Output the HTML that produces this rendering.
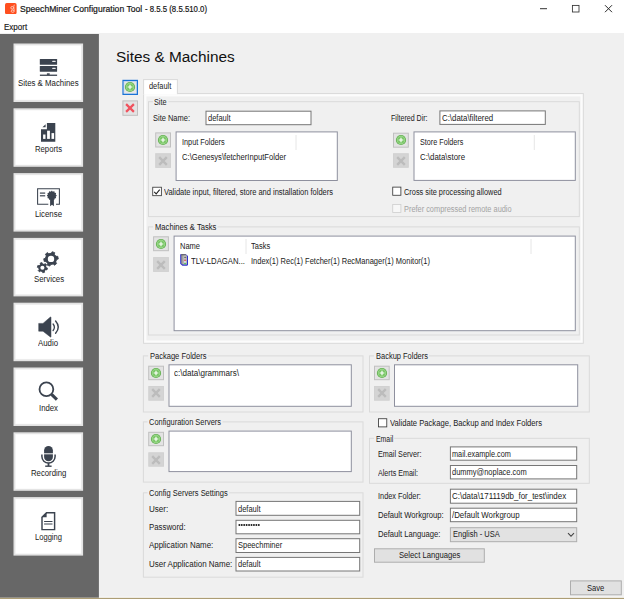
<!DOCTYPE html>
<html><head><meta charset="utf-8"><title>SpeechMiner Configuration Tool</title>
<style>
html,body{margin:0;padding:0;}
body{width:624px;height:599px;overflow:hidden;background:#fff;position:relative;font-family:"Liberation Sans",sans-serif;}
div,span,svg{position:absolute;box-sizing:border-box;}
.t{white-space:pre;transform-origin:0 0;}
</style></head>
<body>
<svg style="left:0;top:0" width="624" height="599" viewBox="0 0 624 599">
<rect x="0.00" y="0.00" width="624.00" height="33.00" rx="0" fill="#fff"/>
<rect x="0.00" y="33.00" width="624.00" height="566.00" rx="0" fill="#f0f0f0"/>
<rect x="0.00" y="34.00" width="98.90" height="563.70" rx="0" fill="#676767"/>
<rect x="99.00" y="596.80" width="525.00" height="1.20" rx="0" fill="#ffffff"/>
<rect x="0.00" y="597.80" width="624.00" height="1.20" rx="0" fill="#ac9d75"/>
<rect x="13.50" y="43.50" width="69.60" height="58.50" rx="0" fill="#e3e3e3"/>
<rect x="15.20" y="45.20" width="66.20" height="55.10" rx="0" fill="#f6f6f6"/>
<rect x="15.80" y="45.80" width="65.00" height="53.90" rx="0" fill="#ffffff"/>
<rect x="13.50" y="108.30" width="69.60" height="58.50" rx="0" fill="#e3e3e3"/>
<rect x="15.20" y="110.00" width="66.20" height="55.10" rx="0" fill="#f6f6f6"/>
<rect x="15.80" y="110.60" width="65.00" height="53.90" rx="0" fill="#ffffff"/>
<rect x="13.50" y="173.10" width="69.60" height="58.50" rx="0" fill="#e3e3e3"/>
<rect x="15.20" y="174.80" width="66.20" height="55.10" rx="0" fill="#f6f6f6"/>
<rect x="15.80" y="175.40" width="65.00" height="53.90" rx="0" fill="#ffffff"/>
<rect x="13.50" y="237.90" width="69.60" height="58.50" rx="0" fill="#e3e3e3"/>
<rect x="15.20" y="239.60" width="66.20" height="55.10" rx="0" fill="#f6f6f6"/>
<rect x="15.80" y="240.20" width="65.00" height="53.90" rx="0" fill="#ffffff"/>
<rect x="13.50" y="302.70" width="69.60" height="58.50" rx="0" fill="#e3e3e3"/>
<rect x="15.20" y="304.40" width="66.20" height="55.10" rx="0" fill="#f6f6f6"/>
<rect x="15.80" y="305.00" width="65.00" height="53.90" rx="0" fill="#ffffff"/>
<rect x="13.50" y="367.50" width="69.60" height="58.50" rx="0" fill="#e3e3e3"/>
<rect x="15.20" y="369.20" width="66.20" height="55.10" rx="0" fill="#f6f6f6"/>
<rect x="15.80" y="369.80" width="65.00" height="53.90" rx="0" fill="#ffffff"/>
<rect x="13.50" y="432.30" width="69.60" height="58.50" rx="0" fill="#e3e3e3"/>
<rect x="15.20" y="434.00" width="66.20" height="55.10" rx="0" fill="#f6f6f6"/>
<rect x="15.80" y="434.60" width="65.00" height="53.90" rx="0" fill="#ffffff"/>
<rect x="13.50" y="497.10" width="69.60" height="58.50" rx="0" fill="#e3e3e3"/>
<rect x="15.20" y="498.80" width="66.20" height="55.10" rx="0" fill="#f6f6f6"/>
<rect x="15.80" y="499.40" width="65.00" height="53.90" rx="0" fill="#ffffff"/>
<rect x="123.05" y="80.45" width="14.30" height="13.90" rx="0" fill="#e7e7e7" stroke="#1b73d6" stroke-width="1.3"/>
<rect x="123.95" y="81.35" width="12.50" height="12.10" rx="0" fill="none" stroke="#a9cbf0" stroke-width="0.5"/>
<rect x="122.90" y="100.90" width="14.60" height="14.40" rx="0" fill="#e3e3e3" stroke="#c0c0c0" stroke-width="1.0"/>
<rect x="143.60" y="93.60" width="439.70" height="249.70" rx="0" fill="#fcfcfc" stroke="#d9d9d9" stroke-width="1.0"/>
<rect x="146.40" y="96.40" width="434.10" height="244.10" rx="0" fill="#f0f0f0"/>
<rect x="143.10" y="79.10" width="34.80" height="15.20" rx="0" fill="#fff"/>
<path d="M143.60 94.10L143.60 79.60" stroke="#d9d9d9" stroke-width="1.0" fill="none"/>
<path d="M143.10 79.60L177.90 79.60" stroke="#d9d9d9" stroke-width="1.0" fill="none"/>
<path d="M177.40 79.60L177.40 94.10" stroke="#d9d9d9" stroke-width="1.0" fill="none"/>
<rect x="148.50" y="101.70" width="430.80" height="114.90" rx="0" fill="none" stroke="#dadada" stroke-width="1.0"/>
<rect x="152.80" y="99.70" width="15.50" height="4.00" rx="0" fill="#f0f0f0"/>
<rect x="206.00" y="111.20" width="105.00" height="13.50" rx="0" fill="#fff" stroke="#767676" stroke-width="1.0"/>
<rect x="155.70" y="132.90" width="14.80" height="14.10" rx="0" fill="#e3e3e3" stroke="#c0c0c0" stroke-width="1.0"/>
<rect x="155.70" y="153.70" width="14.80" height="13.70" rx="0" fill="#d4d4d4" stroke="#d1d1d1" stroke-width="1.0"/>
<rect x="176.10" y="131.90" width="161.20" height="48.60" rx="0" fill="#fff" stroke="#8e909e" stroke-width="1.0"/>
<path d="M296.00 135.00L296.00 150.00" stroke="#e6e6e6" stroke-width="1.0" fill="none"/>
<rect x="152.73" y="187.23" width="8.65" height="8.45" rx="0" fill="#fff" stroke="#3a3a3a" stroke-width="0.85"/>
<rect x="439.90" y="110.90" width="105.40" height="13.50" rx="0" fill="#fff" stroke="#767676" stroke-width="1.0"/>
<rect x="393.50" y="133.20" width="14.80" height="14.00" rx="0" fill="#e3e3e3" stroke="#c0c0c0" stroke-width="1.0"/>
<rect x="393.50" y="153.70" width="14.80" height="13.60" rx="0" fill="#d4d4d4" stroke="#d1d1d1" stroke-width="1.0"/>
<rect x="414.00" y="131.90" width="161.30" height="48.50" rx="0" fill="#fff" stroke="#8e909e" stroke-width="1.0"/>
<path d="M534.30 135.00L534.30 150.00" stroke="#e6e6e6" stroke-width="1.0" fill="none"/>
<rect x="392.73" y="187.12" width="8.15" height="8.15" rx="0" fill="#fff" stroke="#3a3a3a" stroke-width="0.85"/>
<rect x="392.73" y="204.43" width="8.15" height="8.05" rx="0" fill="#f7f7f7" stroke="#cfcfcf" stroke-width="0.85"/>
<rect x="148.40" y="226.90" width="430.90" height="108.10" rx="0" fill="none" stroke="#dadada" stroke-width="1.0"/>
<rect x="153.10" y="224.90" width="64.40" height="4.00" rx="0" fill="#f0f0f0"/>
<rect x="153.60" y="236.80" width="14.80" height="13.90" rx="0" fill="#e3e3e3" stroke="#c0c0c0" stroke-width="1.0"/>
<rect x="153.60" y="257.60" width="14.80" height="13.80" rx="0" fill="#d4d4d4" stroke="#d1d1d1" stroke-width="1.0"/>
<rect x="174.10" y="236.10" width="401.20" height="94.60" rx="0" fill="#fff" stroke="#8e909e" stroke-width="1.0"/>
<path d="M246.00 239.00L246.00 254.00" stroke="#e6e6e6" stroke-width="1.0" fill="none"/>
<path d="M531.00 239.00L531.00 254.00" stroke="#e6e6e6" stroke-width="1.0" fill="none"/>
<rect x="143.40" y="355.90" width="219.60" height="56.10" rx="0" fill="none" stroke="#dadada" stroke-width="1.0"/>
<rect x="148.20" y="353.90" width="59.50" height="4.00" rx="0" fill="#f0f0f0"/>
<rect x="148.70" y="366.20" width="14.80" height="13.50" rx="0" fill="#e3e3e3" stroke="#c0c0c0" stroke-width="1.0"/>
<rect x="148.80" y="386.50" width="14.70" height="13.70" rx="0" fill="#d4d4d4" stroke="#d1d1d1" stroke-width="1.0"/>
<rect x="169.00" y="364.80" width="182.30" height="41.50" rx="0" fill="#fff" stroke="#8e909e" stroke-width="1.0"/>
<rect x="369.50" y="355.90" width="219.80" height="56.10" rx="0" fill="none" stroke="#dadada" stroke-width="1.0"/>
<rect x="374.00" y="353.90" width="55.00" height="4.00" rx="0" fill="#f0f0f0"/>
<rect x="374.50" y="366.20" width="14.70" height="13.50" rx="0" fill="#e3e3e3" stroke="#c0c0c0" stroke-width="1.0"/>
<rect x="374.50" y="386.50" width="14.70" height="13.70" rx="0" fill="#d4d4d4" stroke="#d1d1d1" stroke-width="1.0"/>
<rect x="394.50" y="364.80" width="183.20" height="41.50" rx="0" fill="#fff" stroke="#8e909e" stroke-width="1.0"/>
<rect x="143.40" y="421.90" width="219.60" height="60.20" rx="0" fill="none" stroke="#dadada" stroke-width="1.0"/>
<rect x="147.50" y="419.90" width="75.00" height="4.00" rx="0" fill="#f0f0f0"/>
<rect x="148.70" y="432.30" width="14.80" height="13.40" rx="0" fill="#e3e3e3" stroke="#c0c0c0" stroke-width="1.0"/>
<rect x="148.80" y="452.80" width="14.70" height="13.40" rx="0" fill="#d4d4d4" stroke="#d1d1d1" stroke-width="1.0"/>
<rect x="169.00" y="431.10" width="182.30" height="40.50" rx="0" fill="#fff" stroke="#8e909e" stroke-width="1.0"/>
<rect x="378.53" y="418.73" width="8.25" height="8.15" rx="0" fill="#fff" stroke="#3a3a3a" stroke-width="0.85"/>
<rect x="369.50" y="438.30" width="219.80" height="45.00" rx="0" fill="none" stroke="#dadada" stroke-width="1.0"/>
<rect x="374.00" y="436.30" width="20.20" height="4.00" rx="0" fill="#f0f0f0"/>
<rect x="450.40" y="446.90" width="126.30" height="13.30" rx="0" fill="#fff" stroke="#767676" stroke-width="1.0"/>
<rect x="450.40" y="465.50" width="126.30" height="13.40" rx="0" fill="#fff" stroke="#767676" stroke-width="1.0"/>
<rect x="450.40" y="489.20" width="126.30" height="14.00" rx="0" fill="#fff" stroke="#767676" stroke-width="1.0"/>
<rect x="450.40" y="508.20" width="126.30" height="13.50" rx="0" fill="#fff" stroke="#767676" stroke-width="1.0"/>
<rect x="450.40" y="527.70" width="126.30" height="14.00" rx="0" fill="#e2e2e2" stroke="#adadad" stroke-width="1.0"/>
<rect x="374.50" y="548.80" width="109.80" height="13.40" rx="0" fill="#e1e1e1" stroke="#adadad" stroke-width="1.0"/>
<rect x="143.40" y="492.80" width="219.60" height="84.40" rx="0" fill="none" stroke="#dadada" stroke-width="1.0"/>
<rect x="147.50" y="490.80" width="81.70" height="4.00" rx="0" fill="#f0f0f0"/>
<rect x="236.00" y="501.40" width="123.70" height="13.90" rx="0" fill="#fff" stroke="#767676" stroke-width="1.0"/>
<rect x="236.00" y="520.30" width="123.70" height="13.50" rx="0" fill="#fff" stroke="#767676" stroke-width="1.0"/>
<rect x="236.00" y="538.70" width="123.70" height="13.80" rx="0" fill="#fff" stroke="#767676" stroke-width="1.0"/>
<rect x="236.00" y="557.40" width="123.70" height="13.60" rx="0" fill="#fff" stroke="#767676" stroke-width="1.0"/>
<rect x="570.50" y="580.90" width="50.80" height="13.90" rx="0" fill="#e1e1e1" stroke="#adadad" stroke-width="1.0"/>
</svg>
<svg style="left:5px;top:2.9px" width="11.6" height="11.2" viewBox="0 0 11.6 11.2"><rect x="0" y="0" width="11.6" height="11.2" rx="1.7" fill="#ff4f1f"/><circle cx="7.2" cy="4.8" r="1.35" fill="none" stroke="#ffd2c5" stroke-width="0.85"/><ellipse cx="7.7" cy="8.2" rx="1.5" ry="1.15" fill="none" stroke="#ffd2c5" stroke-width="0.85"/><path d="M9.3 1.7 Q8.6 3.4 8.9 5.2 Q9.3 6.6 9.1 7.8" fill="none" stroke="#ffd2c5" stroke-width="0.85"/></svg>
<span class="t" style="left:20.00px;top:2.00px;font-size:9.7px;line-height:13.58px;color:#111;font-weight:normal;transform:scaleX(0.8875);-webkit-text-stroke:0.22px #222;">SpeechMiner Configuration Tool</span>
<span class="t" style="left:145.00px;top:2.00px;font-size:9.7px;line-height:13.58px;color:#111;font-weight:normal;transform:scaleX(0.8050);-webkit-text-stroke:0.22px #222;">- 8.5.5 (8.5.510.0)</span>
<svg style="left:536px;top:0" width="88" height="18" viewBox="0 0 88 18"><path d="M4 8.7h7" stroke="#333" stroke-width="1"/><rect x="36.4" y="5.4" width="6.6" height="6.6" fill="none" stroke="#333" stroke-width="0.85"/><path d="M69 5.2l7 7M76 5.2l-7 7" stroke="#2a2a2a" stroke-width="1.0"/></svg>
<span class="t" style="left:4.40px;top:21.00px;font-size:8.8px;line-height:12.32px;color:#111;font-weight:normal;transform:scaleX(0.9120);-webkit-text-stroke:0.15px #222;">Export</span>
<span class="t" style="left:115.90px;top:46.00px;font-size:15.3px;line-height:21.42px;color:#111;font-weight:normal;transform:scaleX(1.0052);">Sites &amp; Machines</span>
<svg style="left:124.20px;top:81.40px" width="12" height="12" viewBox="0 0 12 12"><circle cx="6" cy="6" r="5.1" fill="#62b050"/><circle cx="6" cy="6" r="4.25" fill="#a4dc94"/><circle cx="6" cy="6" r="3.5" fill="#7cc869"/><path d="M6 3.7v4.6M3.7 6h4.6" stroke="#fff" stroke-width="1.15"/></svg>
<svg style="left:124.20px;top:102.10px" width="12" height="12" viewBox="0 0 12 12"><path d="M2.1 2.1l7.8 7.8M9.9 2.1l-7.8 7.8" stroke="#f0525e" stroke-width="2.2"/></svg>
<span class="t" style="left:148.70px;top:80.00px;font-size:8.9px;line-height:12.46px;color:#1a1a1a;font-weight:normal;transform:scaleX(0.8328);">default</span>
<span class="t" style="left:154.30px;top:96.00px;font-size:8.9px;line-height:12.46px;color:#1a1a1a;font-weight:normal;transform:scaleX(0.8172);">Site</span>
<span class="t" style="left:152.50px;top:112.00px;font-size:8.9px;line-height:12.46px;color:#1a1a1a;font-weight:normal;transform:scaleX(0.8427);">Site Name:</span>
<span class="t" style="left:207.60px;top:112.00px;font-size:8.9px;line-height:12.46px;color:#1a1a1a;font-weight:normal;transform:scaleX(0.8450);">default</span>
<svg style="left:157.10px;top:133.95px" width="12" height="12" viewBox="0 0 12 12"><circle cx="6" cy="6" r="5.1" fill="#62b050"/><circle cx="6" cy="6" r="4.25" fill="#a4dc94"/><circle cx="6" cy="6" r="3.5" fill="#7cc869"/><path d="M6 3.7v4.6M3.7 6h4.6" stroke="#fff" stroke-width="1.15"/></svg>
<svg style="left:157.10px;top:154.55px" width="12" height="12" viewBox="0 0 12 12"><path d="M2.2 2.2l7.6 7.6M9.8 2.2l-7.6 7.6" stroke="#bcbcbc" stroke-width="2.4"/></svg>
<span class="t" style="left:181.70px;top:136.00px;font-size:8.9px;line-height:12.46px;color:#1a1a1a;font-weight:normal;transform:scaleX(0.8222);">Input Folders</span>
<span class="t" style="left:181.70px;top:151.00px;font-size:8.9px;line-height:12.46px;color:#1a1a1a;font-weight:normal;transform:scaleX(0.8605);">C:\Genesys\fetcherInputFolder</span>
<svg style="left:152.30px;top:186.80px" width="10" height="10" viewBox="0 0 10 10"><path d="M2.2 4.8l2.0 2.1L7.7 2.7" fill="none" stroke="#222" stroke-width="1.05"/></svg>
<span class="t" style="left:164.00px;top:186.00px;font-size:8.9px;line-height:12.46px;color:#1a1a1a;font-weight:normal;transform:scaleX(0.8444);">Validate input, filtered, store and installation folders</span>
<span class="t" style="left:390.70px;top:112.00px;font-size:8.9px;line-height:12.46px;color:#1a1a1a;font-weight:normal;transform:scaleX(0.7978);">Filtered Dir:</span>
<span class="t" style="left:441.80px;top:112.00px;font-size:8.9px;line-height:12.46px;color:#1a1a1a;font-weight:normal;transform:scaleX(0.8871);">C:\data\filtered</span>
<svg style="left:394.90px;top:134.20px" width="12" height="12" viewBox="0 0 12 12"><circle cx="6" cy="6" r="5.1" fill="#62b050"/><circle cx="6" cy="6" r="4.25" fill="#a4dc94"/><circle cx="6" cy="6" r="3.5" fill="#7cc869"/><path d="M6 3.7v4.6M3.7 6h4.6" stroke="#fff" stroke-width="1.15"/></svg>
<svg style="left:394.90px;top:154.50px" width="12" height="12" viewBox="0 0 12 12"><path d="M2.2 2.2l7.6 7.6M9.8 2.2l-7.6 7.6" stroke="#bcbcbc" stroke-width="2.4"/></svg>
<span class="t" style="left:419.70px;top:136.00px;font-size:8.9px;line-height:12.46px;color:#1a1a1a;font-weight:normal;transform:scaleX(0.8127);">Store Folders</span>
<span class="t" style="left:419.70px;top:151.00px;font-size:8.9px;line-height:12.46px;color:#1a1a1a;font-weight:normal;transform:scaleX(0.8856);">C:\data\store</span>
<span class="t" style="left:403.70px;top:186.00px;font-size:8.9px;line-height:12.46px;color:#1a1a1a;font-weight:normal;transform:scaleX(0.8313);">Cross site processing allowed</span>
<span class="t" style="left:403.70px;top:203.00px;font-size:8.9px;line-height:12.46px;color:#a3a3a3;font-weight:normal;transform:scaleX(0.8325);">Prefer compressed remote audio</span>
<span class="t" style="left:154.60px;top:221.00px;font-size:8.9px;line-height:12.46px;color:#1a1a1a;font-weight:normal;transform:scaleX(0.8604);">Machines &amp; Tasks</span>
<svg style="left:155.00px;top:237.75px" width="12" height="12" viewBox="0 0 12 12"><circle cx="6" cy="6" r="5.1" fill="#62b050"/><circle cx="6" cy="6" r="4.25" fill="#a4dc94"/><circle cx="6" cy="6" r="3.5" fill="#7cc869"/><path d="M6 3.7v4.6M3.7 6h4.6" stroke="#fff" stroke-width="1.15"/></svg>
<svg style="left:155.00px;top:258.50px" width="12" height="12" viewBox="0 0 12 12"><path d="M2.2 2.2l7.6 7.6M9.8 2.2l-7.6 7.6" stroke="#bcbcbc" stroke-width="2.4"/></svg>
<span class="t" style="left:179.60px;top:240.00px;font-size:8.9px;line-height:12.46px;color:#1a1a1a;font-weight:normal;transform:scaleX(0.8450);">Name</span>
<span class="t" style="left:250.70px;top:240.00px;font-size:8.9px;line-height:12.46px;color:#1a1a1a;font-weight:normal;transform:scaleX(0.8450);">Tasks</span>
<span class="t" style="left:191.00px;top:255.00px;font-size:8.9px;line-height:12.46px;color:#1a1a1a;font-weight:normal;transform:scaleX(0.8712);">TLV-LDAGAN...</span>
<span class="t" style="left:250.70px;top:255.00px;font-size:8.9px;line-height:12.46px;color:#1a1a1a;font-weight:normal;transform:scaleX(0.8440);">Index(1) Rec(1) Fetcher(1) RecManager(1) Monitor(1)</span>
<svg style="left:179.7px;top:253.9px" width="8.4" height="12" viewBox="0 0 8.4 12"><defs><linearGradient id="tw" x1="0" x2="1" y1="0" y2="0"><stop offset="0" stop-color="#8a8a8a"/><stop offset="0.55" stop-color="#c4c4c4"/><stop offset="1" stop-color="#b0b0b0"/></linearGradient></defs><path d="M0.2 0.3 H5.9 L8.1 2 V10.7 L7.2 11.8 H2.4 L0.2 9.8 Z" fill="#3030cc"/><path d="M1.2 0.4 H5.8 L7.0 1.9 V10.6 H2.7 L1.2 9.5 Z" fill="url(#tw)"/><rect x="1.2" y="0.3" width="4.6" height="1.0" fill="#585858"/><rect x="4.2" y="2.9" width="2.0" height="0.9" fill="#5a5a5a"/><rect x="4.1" y="5.7" width="2.0" height="1.1" fill="#e25555"/><rect x="4.1" y="7.4" width="2.0" height="1.0" fill="#ececf4"/><rect x="4.1" y="9.0" width="2.1" height="1.3" fill="#5cc466"/></svg>
<span class="t" style="left:149.70px;top:350.00px;font-size:8.9px;line-height:12.46px;color:#1a1a1a;font-weight:normal;transform:scaleX(0.8482);">Package Folders</span>
<svg style="left:150.10px;top:366.95px" width="12" height="12" viewBox="0 0 12 12"><circle cx="6" cy="6" r="5.1" fill="#62b050"/><circle cx="6" cy="6" r="4.25" fill="#a4dc94"/><circle cx="6" cy="6" r="3.5" fill="#7cc869"/><path d="M6 3.7v4.6M3.7 6h4.6" stroke="#fff" stroke-width="1.15"/></svg>
<svg style="left:150.15px;top:387.35px" width="12" height="12" viewBox="0 0 12 12"><path d="M2.2 2.2l7.6 7.6M9.8 2.2l-7.6 7.6" stroke="#bcbcbc" stroke-width="2.4"/></svg>
<span class="t" style="left:174.00px;top:367.00px;font-size:8.9px;line-height:12.46px;color:#1a1a1a;font-weight:normal;transform:scaleX(0.9087);">c:\data\grammars\</span>
<span class="t" style="left:375.50px;top:350.00px;font-size:8.9px;line-height:12.46px;color:#1a1a1a;font-weight:normal;transform:scaleX(0.8432);">Backup Folders</span>
<svg style="left:375.85px;top:366.95px" width="12" height="12" viewBox="0 0 12 12"><circle cx="6" cy="6" r="5.1" fill="#62b050"/><circle cx="6" cy="6" r="4.25" fill="#a4dc94"/><circle cx="6" cy="6" r="3.5" fill="#7cc869"/><path d="M6 3.7v4.6M3.7 6h4.6" stroke="#fff" stroke-width="1.15"/></svg>
<svg style="left:375.85px;top:387.35px" width="12" height="12" viewBox="0 0 12 12"><path d="M2.2 2.2l7.6 7.6M9.8 2.2l-7.6 7.6" stroke="#bcbcbc" stroke-width="2.4"/></svg>
<span class="t" style="left:149.00px;top:416.00px;font-size:8.9px;line-height:12.46px;color:#1a1a1a;font-weight:normal;transform:scaleX(0.8387);">Configuration Servers</span>
<svg style="left:150.10px;top:433.00px" width="12" height="12" viewBox="0 0 12 12"><circle cx="6" cy="6" r="5.1" fill="#62b050"/><circle cx="6" cy="6" r="4.25" fill="#a4dc94"/><circle cx="6" cy="6" r="3.5" fill="#7cc869"/><path d="M6 3.7v4.6M3.7 6h4.6" stroke="#fff" stroke-width="1.15"/></svg>
<svg style="left:150.15px;top:453.50px" width="12" height="12" viewBox="0 0 12 12"><path d="M2.2 2.2l7.6 7.6M9.8 2.2l-7.6 7.6" stroke="#bcbcbc" stroke-width="2.4"/></svg>
<span class="t" style="left:389.70px;top:417.00px;font-size:8.9px;line-height:12.46px;color:#1a1a1a;font-weight:normal;transform:scaleX(0.8613);">Validate Package, Backup and Index Folders</span>
<span class="t" style="left:375.50px;top:433.00px;font-size:8.9px;line-height:12.46px;color:#1a1a1a;font-weight:normal;transform:scaleX(0.7747);">Email</span>
<span class="t" style="left:378.40px;top:448.00px;font-size:8.9px;line-height:12.46px;color:#1a1a1a;font-weight:normal;transform:scaleX(0.8148);">Email Server:</span>
<span class="t" style="left:451.80px;top:448.00px;font-size:8.9px;line-height:12.46px;color:#1a1a1a;font-weight:normal;transform:scaleX(0.8234);">mail.example.com</span>
<span class="t" style="left:378.40px;top:467.00px;font-size:8.9px;line-height:12.46px;color:#1a1a1a;font-weight:normal;transform:scaleX(0.8030);">Alerts Email:</span>
<span class="t" style="left:451.80px;top:466.00px;font-size:8.9px;line-height:12.46px;color:#1a1a1a;font-weight:normal;transform:scaleX(0.8450);">dummy@noplace.com</span>
<span class="t" style="left:378.40px;top:490.00px;font-size:8.9px;line-height:12.46px;color:#1a1a1a;font-weight:normal;transform:scaleX(0.8280);">Index Folder:</span>
<span class="t" style="left:451.80px;top:490.00px;font-size:8.9px;line-height:12.46px;color:#1a1a1a;font-weight:normal;transform:scaleX(0.8959);">C:\data\171119db_for_test\index</span>
<span class="t" style="left:378.40px;top:509.00px;font-size:8.9px;line-height:12.46px;color:#1a1a1a;font-weight:normal;transform:scaleX(0.8598);">Default Workgroup:</span>
<span class="t" style="left:451.80px;top:509.00px;font-size:8.9px;line-height:12.46px;color:#1a1a1a;font-weight:normal;transform:scaleX(0.8847);">/Default Workgroup</span>
<span class="t" style="left:378.40px;top:528.00px;font-size:8.9px;line-height:12.46px;color:#1a1a1a;font-weight:normal;transform:scaleX(0.8588);">Default Language:</span>
<span class="t" style="left:453.00px;top:528.00px;font-size:8.9px;line-height:12.46px;color:#1a1a1a;font-weight:normal;transform:scaleX(0.8452);">English - USA</span>
<svg style="left:567px;top:532.3px" width="8" height="6" viewBox="0 0 8 6"><path d="M1 1.2l3 3 3-3" fill="none" stroke="#444" stroke-width="1.05"/></svg>
<span class="t" style="left:399.00px;top:549.00px;font-size:8.9px;line-height:12.46px;color:#1a1a1a;font-weight:normal;transform:scaleX(0.8626);">Select Languages</span>
<span class="t" style="left:149.00px;top:487.00px;font-size:8.9px;line-height:12.46px;color:#1a1a1a;font-weight:normal;transform:scaleX(0.8441);">Config Servers Settings</span>
<span class="t" style="left:149.00px;top:503.00px;font-size:8.9px;line-height:12.46px;color:#1a1a1a;font-weight:normal;transform:scaleX(0.9096);">User:</span>
<span class="t" style="left:237.80px;top:503.00px;font-size:8.9px;line-height:12.46px;color:#1a1a1a;font-weight:normal;transform:scaleX(0.8450);">default</span>
<span class="t" style="left:149.00px;top:521.00px;font-size:8.9px;line-height:12.46px;color:#1a1a1a;font-weight:normal;transform:scaleX(0.8833);">Password:</span>
<svg style="left:238px;top:522px" width="26" height="6" viewBox="0 0 26 6"><circle cx="1.35" cy="2.9" r="1.0" fill="#1a1a1a"/><circle cx="3.78" cy="2.9" r="1.0" fill="#1a1a1a"/><circle cx="6.21" cy="2.9" r="1.0" fill="#1a1a1a"/><circle cx="8.64" cy="2.9" r="1.0" fill="#1a1a1a"/><circle cx="11.07" cy="2.9" r="1.0" fill="#1a1a1a"/><circle cx="13.50" cy="2.9" r="1.0" fill="#1a1a1a"/><circle cx="15.93" cy="2.9" r="1.0" fill="#1a1a1a"/><circle cx="18.36" cy="2.9" r="1.0" fill="#1a1a1a"/><circle cx="20.79" cy="2.9" r="1.0" fill="#1a1a1a"/></svg>
<span class="t" style="left:149.00px;top:539.00px;font-size:8.9px;line-height:12.46px;color:#1a1a1a;font-weight:normal;transform:scaleX(0.8927);">Application Name:</span>
<span class="t" style="left:237.80px;top:539.00px;font-size:8.9px;line-height:12.46px;color:#1a1a1a;font-weight:normal;transform:scaleX(0.8450);">Speechminer</span>
<span class="t" style="left:149.00px;top:558.00px;font-size:8.9px;line-height:12.46px;color:#1a1a1a;font-weight:normal;transform:scaleX(0.8981);">User Application Name:</span>
<span class="t" style="left:237.80px;top:558.00px;font-size:8.9px;line-height:12.46px;color:#1a1a1a;font-weight:normal;transform:scaleX(0.8450);">default</span>
<span class="t" style="left:587.00px;top:582.00px;font-size:8.9px;line-height:12.46px;color:#1a1a1a;font-weight:normal;transform:scaleX(0.8550);">Save</span>
<svg style="left:28.00px;top:52.00px" width="42" height="42" viewBox="0 0 42 42"><rect x="11.8" y="6.9" width="17.3" height="5.9" rx="0.5" fill="#3b434f"/><rect x="11.8" y="14.0" width="17.3" height="5.8" rx="0.5" fill="#3b434f"/><rect x="24.2" y="8.7" width="3.5" height="1.2" rx="0.5" fill="#e8e8ea"/><rect x="24.2" y="15.8" width="3.5" height="1.2" rx="0.5" fill="#e8e8ea"/><rect x="18.9" y="21.3" width="2.8" height="1.6" fill="#3b434f"/><rect x="11.9" y="22.6" width="17.2" height="1.3" fill="#3b434f"/></svg>
<span class="t" style="left:17.70px;top:77.00px;font-size:8.9px;line-height:12.46px;color:#1a1a1a;font-weight:normal;transform:scaleX(0.8837);">Sites &amp; Machines</span>
<svg style="left:28.00px;top:117.00px" width="42" height="42" viewBox="0 0 42 42"><path d="M18.9 6 H27.3 V24.7 H13 V12.3 H18.9 Z" fill="#3b434f"/><path d="M17.6 7.3 V10.2 H14.4 Z" fill="#3b434f"/><rect x="15.1" y="17.5" width="2.4" height="4.4" fill="#fff"/><rect x="19.1" y="13.7" width="2.8" height="8.2" fill="#fff"/><rect x="23.5" y="16.1" width="2.6" height="5.8" fill="#fff"/></svg>
<span class="t" style="left:35.20px;top:143.00px;font-size:8.9px;line-height:12.46px;color:#1a1a1a;font-weight:normal;transform:scaleX(0.8688);">Reports</span>
<svg style="left:28.00px;top:182.00px" width="42" height="42" viewBox="0 0 42 42"><path d="M20.3 22.3 H9.6 V6.7 H31.4 V22.3 H28" fill="none" stroke="#3b434f" stroke-width="1.05"/><rect x="11.9" y="10.5" width="5.3" height="1.2" fill="#3b434f"/><rect x="11.9" y="13.2" width="5.3" height="1.2" fill="#3b434f"/><polygon points="28.70,13.60 28.57,13.91 28.26,14.19 27.94,14.42 27.76,14.66 27.79,14.96 27.96,15.32 28.09,15.72 28.04,16.05 27.78,16.26 27.37,16.34 26.97,16.38 26.70,16.50 26.58,16.77 26.54,17.17 26.46,17.58 26.25,17.84 25.92,17.89 25.52,17.76 25.16,17.59 24.86,17.56 24.62,17.74 24.39,18.06 24.11,18.37 23.80,18.50 23.49,18.37 23.21,18.06 22.98,17.74 22.74,17.56 22.44,17.59 22.08,17.76 21.68,17.89 21.35,17.84 21.14,17.58 21.06,17.17 21.02,16.77 20.90,16.50 20.63,16.38 20.23,16.34 19.82,16.26 19.56,16.05 19.51,15.72 19.64,15.32 19.81,14.96 19.84,14.66 19.66,14.42 19.34,14.19 19.03,13.91 18.90,13.60 19.03,13.29 19.34,13.01 19.66,12.78 19.84,12.54 19.81,12.24 19.64,11.88 19.51,11.48 19.56,11.15 19.82,10.94 20.23,10.86 20.63,10.82 20.90,10.70 21.02,10.43 21.06,10.03 21.14,9.62 21.35,9.36 21.68,9.31 22.08,9.44 22.44,9.61 22.74,9.64 22.98,9.46 23.21,9.14 23.49,8.83 23.80,8.70 24.11,8.83 24.39,9.14 24.62,9.46 24.86,9.64 25.16,9.61 25.52,9.44 25.92,9.31 26.25,9.36 26.46,9.62 26.54,10.03 26.58,10.43 26.70,10.70 26.97,10.82 27.37,10.86 27.78,10.94 28.04,11.15 28.09,11.48 27.96,11.88 27.79,12.24 27.76,12.54 27.94,12.78 28.26,13.01 28.57,13.29" fill="#3b434f"/><path d="M22.1 17 V24.2 L24 22.8 L25.9 24.2 V17 Z" fill="#3b434f"/></svg>
<span class="t" style="left:35.20px;top:208.00px;font-size:8.9px;line-height:12.46px;color:#1a1a1a;font-weight:normal;transform:scaleX(0.8825);">License</span>
<svg style="left:28.00px;top:247.00px" width="42" height="42" viewBox="0 0 42 42"><polygon points="27.71,14.93 28.66,16.51 26.55,18.28 25.17,17.06 22.73,17.49 21.84,19.11 19.25,18.16 19.62,16.36 18.02,14.46 16.18,14.50 15.70,11.79 17.44,11.20 18.29,8.87 17.34,7.29 19.45,5.52 20.83,6.74 23.27,6.31 24.16,4.69 26.75,5.64 26.38,7.44 27.98,9.34 29.82,9.30 30.30,12.01 28.56,12.60" fill="#3b434f" stroke="#3b434f" stroke-width="0.8" stroke-linejoin="round"/><circle cx="23.0" cy="11.9" r="5.6" fill="#3b434f"/><circle cx="23.0" cy="11.9" r="3.2" fill="#fff"/><polygon points="18.10,20.56 19.49,21.07 18.99,22.93 17.53,22.67 16.37,23.83 16.63,25.29 14.77,25.79 14.26,24.40 12.67,23.97 11.54,24.92 10.18,23.56 11.13,22.43 10.70,20.84 9.31,20.33 9.81,18.47 11.27,18.73 12.43,17.57 12.17,16.11 14.03,15.61 14.54,17.00 16.13,17.43 17.26,16.48 18.62,17.84 17.67,18.97" fill="#3b434f" stroke="#3b434f" stroke-width="0.8" stroke-linejoin="round"/><circle cx="14.4" cy="20.7" r="3.7" fill="#3b434f"/><circle cx="14.4" cy="20.7" r="2.05" fill="#fff"/></svg>
<span class="t" style="left:34.00px;top:273.00px;font-size:8.9px;line-height:12.46px;color:#1a1a1a;font-weight:normal;transform:scaleX(0.8845);">Services</span>
<svg style="left:28.00px;top:312.00px" width="42" height="42" viewBox="0 0 42 42"><path d="M10.7 11.4 H15 L22.4 5 Q23 4.7 23 5.6 V24.6 Q23 25.4 22.4 25 L15 19.2 H10.7 Z" fill="#3b434f" stroke="#3b434f" stroke-width="0.5" stroke-linejoin="round"/><path d="M25.1 12 Q27.7 15.2 25.1 18.5" fill="none" stroke="#3b434f" stroke-width="1.3" stroke-linecap="round"/><path d="M27.6 9 Q33 15.2 27.6 21.3" fill="none" stroke="#3b434f" stroke-width="1.4" stroke-linecap="round"/></svg>
<span class="t" style="left:38.40px;top:337.00px;font-size:8.9px;line-height:12.46px;color:#1a1a1a;font-weight:normal;transform:scaleX(0.8853);">Audio</span>
<svg style="left:28.00px;top:377.00px" width="42" height="42" viewBox="0 0 42 42"><circle cx="18.4" cy="12.3" r="6.9" fill="none" stroke="#3b434f" stroke-width="1.8"/><path d="M23.6 17.4 L28.9 22.6" stroke="#3b434f" stroke-width="3.1"/></svg>
<span class="t" style="left:39.20px;top:402.00px;font-size:8.9px;line-height:12.46px;color:#1a1a1a;font-weight:normal;transform:scaleX(0.8748);">Index</span>
<svg style="left:28.00px;top:442.00px" width="42" height="42" viewBox="0 0 42 42"><rect x="16.1" y="3.9" width="8.8" height="15.4" rx="4.4" fill="#3b434f"/><rect x="15.5" y="11.3" width="10" height="1.0" fill="#fff"/><path d="M13.9 12.6 V14.5 A6.6 6.6 0 0 0 27.1 14.5 V12.6" fill="none" stroke="#3b434f" stroke-width="1.5"/><rect x="19.6" y="21" width="1.8" height="3" fill="#3b434f"/><rect x="17.2" y="23.5" width="6.4" height="1.4" fill="#3b434f"/></svg>
<span class="t" style="left:31.20px;top:467.00px;font-size:8.9px;line-height:12.46px;color:#1a1a1a;font-weight:normal;transform:scaleX(0.8747);">Recording</span>
<svg style="left:28.00px;top:507.00px" width="42" height="42" viewBox="0 0 42 42"><path d="M18.6 5.8 H26.6 V22.6 H14 V10.2 Z" fill="none" stroke="#3b434f" stroke-width="1.45" stroke-linejoin="miter"/><path d="M18.6 5.1 V10.2 H13.3 Z" fill="#3b434f"/><rect x="16.1" y="14" width="8.4" height="1.0" fill="#3b434f"/><rect x="16.1" y="16.5" width="8.4" height="1.0" fill="#3b434f"/></svg>
<span class="t" style="left:35.20px;top:531.00px;font-size:8.9px;line-height:12.46px;color:#1a1a1a;font-weight:normal;transform:scaleX(0.8546);">Logging</span>
</body></html>
